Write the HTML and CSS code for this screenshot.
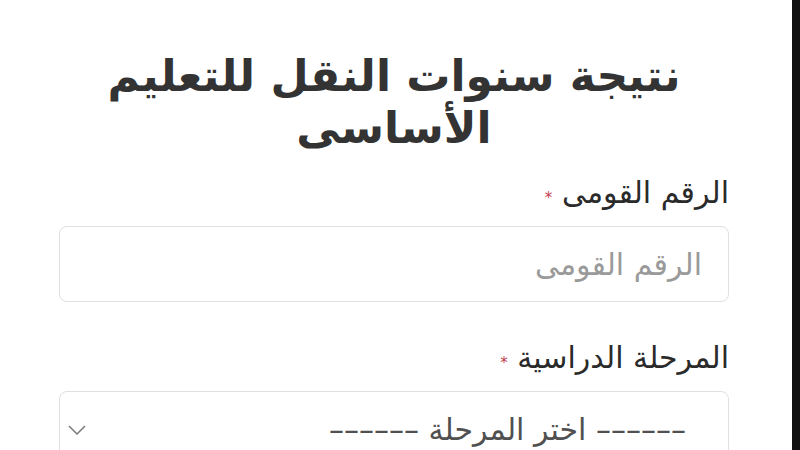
FILE: index.html
```html
<!DOCTYPE html>
<html lang="ar" dir="rtl">
<head>
    <meta charset="UTF-8">
    <meta name="viewport" content="width=device-width, initial-scale=1.0">
    <title>نتيجة سنوات النقل للتعليم الأساسى</title>
    <link rel="stylesheet" href="styles.css">
</head>
<body>

<div class="page">
    <div class="form">
        <h2>نتيجة سنوات النقل للتعليم الأساسى</h2>

        <label for="nid">الرقم القومى <span class="req">*</span></label>
        <input type="text" id="nid" placeholder="الرقم القومى">

        <label for="stage">المرحلة الدراسية <span class="req">*</span></label>
        <div class="select">
            <span class="select-text"><span class="dash">––––––</span> اختر المرحلة <span class="dash">––––––</span></span>
            <svg class="chevron" width="18" height="10" viewBox="0 0 18 10">
                <path d="M1 1 L9 9 L17 1" fill="none" stroke="#7a7a7a" stroke-width="1.5"/>
            </svg>
        </div>
    </div>
    <div class="edge"></div>
</div>

</body>
</html>
```

FILE: styles.css
```css
body {
    margin: 0;
    padding: 0;
    background: #fff;
    font-family: "DejaVu Sans", "Noto Sans Arabic", sans-serif;
    color: #333;
}
.page {
    display: flex;
    flex-direction: row-reverse;
    height: 450px;
    overflow: hidden;
}
.edge {
    width: 8px;
    background: #111;
}
.form {
    flex: 1;
    padding: 0 63px 0 59px;
}
h2 {
    text-align: center;
    font-size: 44px;
    font-weight: bold;
    line-height: 52px;
    margin: 50px 0 21px;
    color: #333;
    padding: 0 30px;
}
label {
    display: block;
    font-size: 30px;
    line-height: 36px;
    color: #2a2a2a;
    margin-bottom: 10px;
}
.req {
    color: #c0404f;
    font-size: 15px;
}
input {
    display: block;
    width: 100%;
    box-sizing: border-box;
    height: 76px;
    padding: 0 26px;
    border: 1.5px solid #e0e0e0;
    border-radius: 8px;
    font-family: inherit;
    font-size: 30px;
    margin-bottom: 38px;
}
input::placeholder {
    color: #9a9a9a;
}
.select {
    display: flex;
    align-items: center;
    justify-content: space-between;
    height: 76px;
    padding: 0 42px 0 8px;
    border: 1.5px solid #e0e0e0;
    border-radius: 8px;
    font-size: 30px;
    line-height: 36px;
    color: #505050;
}
.dash {
    letter-spacing: 7px;
}
```
